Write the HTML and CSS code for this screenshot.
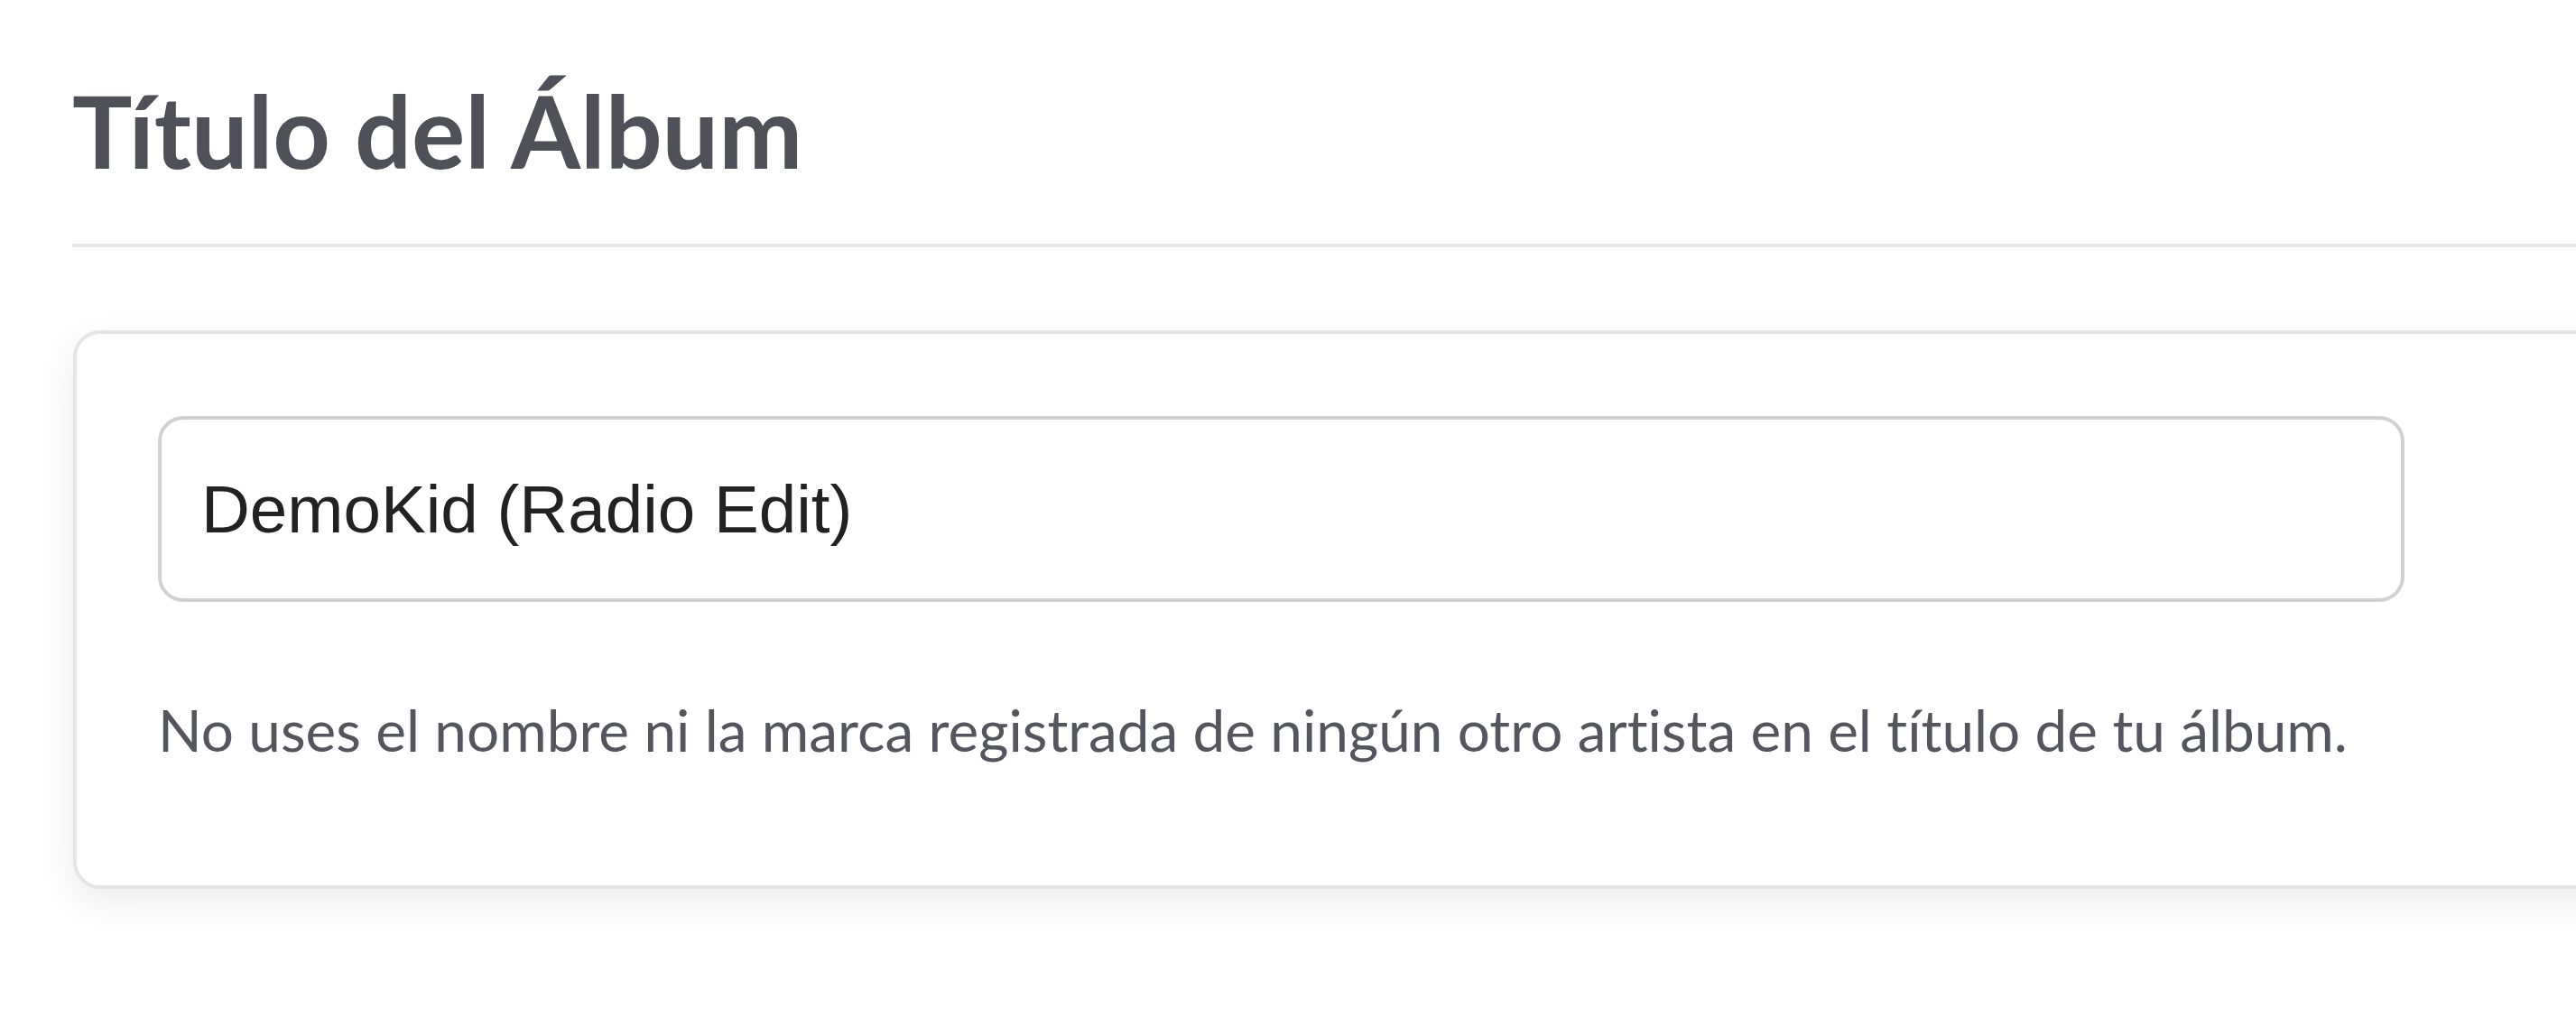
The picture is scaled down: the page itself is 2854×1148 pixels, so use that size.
FILE: index.html
```html
<!DOCTYPE html>
<html lang="es">
<head>
<meta charset="utf-8">
<title>Título del Álbum</title>
<link rel="stylesheet" href="styles.css">
</head>
<body>
<main class="page">
  <h1 class="page-title">Título del Álbum</h1>
  <div class="divider"></div>
  <section class="card">
    <input class="text-field" type="text" value="DemoKid (Radio Edit)">
    <p class="hint">No uses el nombre ni la marca registrada de ningún otro artista en el título de tu álbum.</p>
  </section>
</main>
</body>
</html>
```

FILE: styles.css
```css
html {
  overflow: hidden;
  background: #ffffff;
}

body {
  margin: 0;
  padding: 0;
  min-height: 100vh;
  background: #ffffff;
}

.page {
  padding: 78px 0 0 80px;
  margin-right: -120px;
  font-family: Lato, "Open Sans", sans-serif;
  font-variant-ligatures: none;
}

.page-title {
  margin: 0;
  font-family: Lato, sans-serif;
  font-weight: 700;
  font-size: 111px;
  line-height: 1.2;
  color: #505058;
}

.divider {
  margin-top: 59px;
  height: 4px;
  background: #e5e5ea;
}

.card {
  margin-top: 92px;
  margin-left: 1px;
  background: #ffffff;
  border: 4px solid #e5e5e5;
  border-radius: 30px;
  box-shadow: 0 14px 44px rgba(0, 0, 0, 0.08);
  padding: 91px 0 133px 90px;
}

.text-field {
  display: block;
  box-sizing: border-box;
  width: 2489px;
  height: 206px;
  margin: 0;
  padding: 0 44px;
  border: 4px solid #d1d1d1;
  border-radius: 28px;
  background: #ffffff;
  font-family: "Liberation Sans", Arial, sans-serif;
  font-size: 74.6px;
  color: #222222;
  outline: none;
}

.hint {
  margin: 104px 0 0 0;
  font-family: Lato, sans-serif;
  font-size: 63.85px;
  line-height: 1.2;
  color: #55555d;
  font-variant-ligatures: none;
}
```
